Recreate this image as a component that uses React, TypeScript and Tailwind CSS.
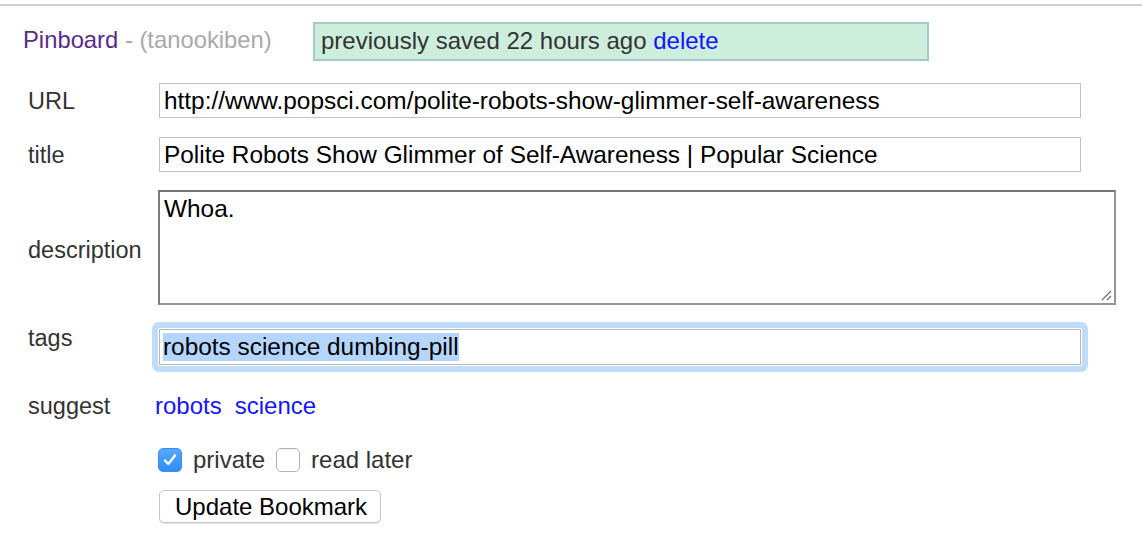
import React from "react";

const font = { fontFamily: '"Liberation Sans", Helvetica, Arial, sans-serif' };

function Label({ children, className = "w-[159px]" }: { children: React.ReactNode; className?: string }) {
  return (
    <div className={`shrink-0 pl-[28px] text-[23.5px] leading-[28px] text-[#333333] whitespace-nowrap ${className}`}>
      {children}
    </div>
  );
}

function TextBox({ value }: { value: string }) {
  return (
    <div className="w-[922px] h-[35px] border border-[#c3c3c3] bg-white pl-[4px] pt-[1px] flex items-center text-[24.4px] leading-[28px] text-black whitespace-nowrap overflow-hidden">
      {value}
    </div>
  );
}

export default function App() {
  return (
    <div style={font} className="w-[1142px] h-[534px] bg-white overflow-hidden">
      <div className="h-[2px] mt-[4px] bg-[#d0d0d0]" />

      {/* header */}
      <div className="mt-[16px] flex items-center h-[39px]">
        <div className="w-[313px] pl-[23px] pb-[3px] text-[23.8px] leading-[28px] whitespace-nowrap">
          <span className="text-[#5a2a8c]">Pinboard</span>
          <span className="text-[#a9a9a9]"> - (tanookiben)</span>
        </div>
        <div className="w-[616px] h-[39px] border-2 border-[#a6cbc6] bg-[#cdeedd] pl-[6px] pb-[2px] flex items-center text-[24px] leading-[28px] text-[#333333] whitespace-nowrap">
          previously saved 22 hours ago&nbsp;<span className="text-[#1414ff]">delete</span>
        </div>
      </div>

      {/* URL */}
      <div className="mt-[22px] flex items-center">
        <Label>URL</Label>
        <TextBox value="http://www.popsci.com/polite-robots-show-glimmer-self-awareness" />
      </div>

      {/* title */}
      <div className="mt-[19px] flex items-center">
        <Label>title</Label>
        <TextBox value="Polite Robots Show Glimmer of Self-Awareness | Popular Science" />
      </div>

      {/* description */}
      <div className="mt-[18px] flex items-center">
        <Label className="w-[158px] mt-[4px]">description</Label>
        <div className="relative w-[958px] h-[115px] border-2 border-t-[#747474] border-l-[#7c7c7c] border-r-[#959595] border-b-[#959595] bg-white pl-[4px] pt-[3px] text-[24.4px] leading-[28px] text-black">
          Whoa.
          <svg className="absolute right-[2px] bottom-[2px]" width="12" height="12" viewBox="0 0 12 12">
            <line x1="2" y1="11" x2="11" y2="2" stroke="#6f6f6f" strokeWidth="1.3" />
            <line x1="7" y1="11" x2="11" y2="7" stroke="#6f6f6f" strokeWidth="1.3" />
          </svg>
        </div>
      </div>

      {/* tags */}
      <div className="mt-[17px] flex items-start">
        <Label className="w-[152px] mt-[2px]">tags</Label>
        <div className="p-[6px] rounded-[7px] bg-[#c0dcfb]">
          <div className="p-[1px] bg-white">
            <div className="w-[922px] h-[36px] border border-[#b7b7b7] bg-white pl-[3px] flex items-center text-[24.4px] leading-[28px] text-black whitespace-nowrap">
              <span className="bg-[#b4d6fe]">robots science dumbing-pill</span>
            </div>
          </div>
        </div>
      </div>

      {/* suggest */}
      <div className="mt-[20px] flex items-center">
        <Label className="w-[155px]">suggest</Label>
        <div className="flex gap-[13px] text-[24px] leading-[28px] text-[#1414ff]">
          <span>robots</span>
          <span>science</span>
        </div>
      </div>

      {/* checkboxes */}
      <div className="mt-[26px] flex items-center pl-[158px] text-[24px] leading-[28px] text-[#333333]">
        <div className="w-[24px] h-[24px] rounded-[5px] bg-gradient-to-b from-[#56a8fd] to-[#2f8df9] border border-[#3b8ff0] flex items-center justify-center">
          <svg width="18" height="18" viewBox="0 0 18 18">
            <path d="M4 9.5 L7.3 13 L14 4.5" fill="none" stroke="white" strokeWidth="2.4" strokeLinecap="round" strokeLinejoin="round" />
          </svg>
        </div>
        <span className="ml-[11px]">private</span>
        <div className="ml-[11px] w-[24px] h-[24px] rounded-[5px] bg-white border border-[#b3b3b3] shadow-[inset_0_1px_1px_rgba(0,0,0,0.05)]" />
        <span className="ml-[11px]">read later</span>
      </div>

      {/* button */}
      <div className="mt-[16px] pl-[159px]">
        <div className="inline-flex items-center w-[222px] h-[33px] rounded-[5px] border border-[#c6c6c6] bg-white shadow-[0_1px_1px_rgba(0,0,0,0.12)] pl-[15px] pt-[1px] text-[24px] leading-[28px] text-black whitespace-nowrap">
          Update Bookmark
        </div>
      </div>
    </div>
  );
}
